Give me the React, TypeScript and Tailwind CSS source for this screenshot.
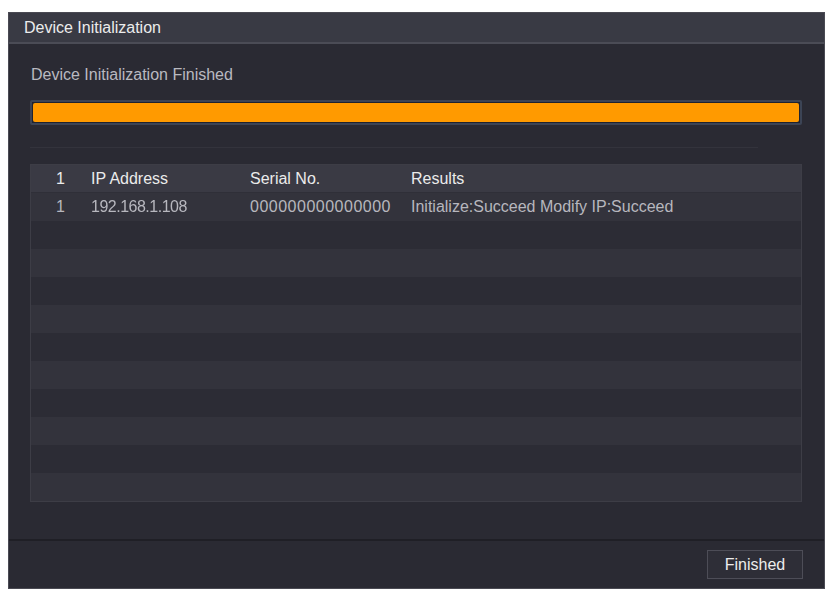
import React from 'react';

const rows = [
  { no: '1', ip: '192.168.1.108', serial: '000000000000000', result: 'Initialize:Succeed Modify IP:Succeed' },
];

const TOTAL_ROWS = 11;

export default function App() {
  const filled = Array.from({ length: TOTAL_ROWS }, (_, i) => rows[i]);

  return (
    <div className="w-[827px] h-[591px] bg-white pt-[12px] pl-[8px]" style={{ fontFamily: '"Liberation Sans", Arial, sans-serif' }}>
      <div className="w-[817px] h-[577px] flex flex-col bg-[#2a2a33] border border-[#4a4a53]">
        {/* Title bar */}
        <div className="h-[31px] shrink-0 flex items-center px-[15px] bg-[#393a44] border-b-2 border-[#4b4c56]">
          <span className="text-[16px] text-[#ececec]">Device Initialization</span>
        </div>

        <div className="flex-1 flex flex-col px-[21px]">
          <div className="pt-[22px] text-[16px] text-[#b9b9c0] leading-[18px] pl-[1px]">Device Initialization Finished</div>

          {/* Progress */}
          <div className="mt-[16px] h-[25px] w-[772px] rounded-[2px] border-2 border-[#3c4455] bg-[#1f2330] p-[1px]">
            <div className="h-full w-full rounded-[2px] bg-[#ff9a00]" />
          </div>

          <div className="mt-[22px] h-px w-[728px] bg-[#33333c]" />

          {/* Table */}
          <div className="mt-[16px] w-[772px] border border-[#3d3d46] text-[16px]">
            <div className="h-[28px] flex items-center bg-[#3a3a44] text-[#ebebeb] border-b border-[#2f2f38]">
              <div className="w-[60px] pl-[25px]">1</div>
              <div className="w-[159px]">IP Address</div>
              <div className="w-[161px]">Serial No.</div>
              <div className="flex-1">Results</div>
            </div>
            {filled.map((r, i) => (
              <div key={i} className={`h-[28px] flex items-center text-[#b7b7be] ${i % 2 === 0 ? 'bg-[#33333c]' : 'bg-[#2c2c35]'}`}>
                {r && (
                  <>
                    <div className="w-[60px] pl-[25px]">{r.no}</div>
                    <div className="w-[159px]"><span className="blur-[0.7px] tracking-[-0.5px]">{r.ip}</span></div>
                    <div className="w-[161px] tracking-[0.5px]">{r.serial}</div>
                    <div className="flex-1">{r.result}</div>
                  </>
                )}
              </div>
            ))}
          </div>
        </div>

        {/* Footer */}
        <div className="h-[49px] shrink-0 border-t-2 border-[#1f1f26] flex items-center justify-end pr-[21px]">
          <button className="w-[96px] h-[29px] border border-[#4d4d57] bg-[#2e2e37] text-[16px] text-[#ececec]">Finished</button>
        </div>
      </div>
    </div>
  );
}
